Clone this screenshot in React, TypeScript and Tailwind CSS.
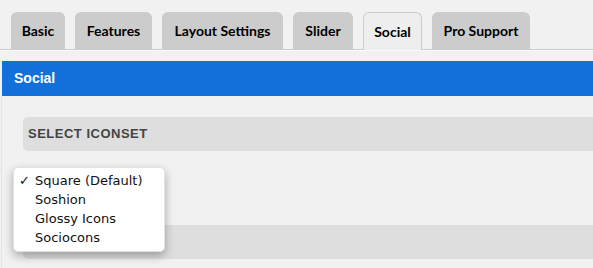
import React from "react";

const tabs = [
    {label: "Basic", w: "w-[54px]"},
    {label: "Features", w: "w-[77px]"},
    {label: "Layout Settings", w: "w-[121px]"},
    {label: "Slider", w: "w-[60px]"},
    {label: "Social", w: "w-[59px]", active: true},
    {label: "Pro Support", w: "w-[98px]"},
];

const options = ["Square (Default)", "Soshion", "Glossy Icons", "Sociocons"];

export default function App() {
    return (
        <main className="w-[593px] h-[268px] overflow-hidden bg-[#f1f1f1] relative">
            {/* tab strip */}
            <div className="flex gap-[10px] pl-[11px] pt-[12px] border-b border-[#cccccc] h-[50px]">
                {tabs.map((t) => (
                    <div key={t.label}
                         className={
                             t.active
                                 ? `${t.w} h-[38px] -mb-px rounded-t-[6px] bg-[#eeeeee] border border-b-0 border-[#cccccc] flex items-center justify-center text-[14px] font-bold text-black [font-family:Lato,sans-serif]`
                                 : `${t.w} h-[37px] rounded-t-[6px] bg-[#cccccc] flex items-center justify-center text-[14px] font-bold text-black [font-family:Lato,sans-serif]`
                         }>
                        {t.label}
                    </div>
                ))}
            </div>

            <div className="h-[11px] border-t border-[#fafafa]"></div>

            {/* section header */}
            <div className="ml-[2px] h-[35px] bg-[#136fd9] flex items-center pl-[12px]">
                <span className="text-white font-bold text-[14px] [font-family:'Liberation_Sans',Arial,sans-serif]">
                    Social
                </span>
            </div>

            {/* body */}
            <div className="ml-[1px] border-l border-[#e4e4e4] h-[200px] pl-[21px] pt-[21px] relative">
                <div className="h-[34px] bg-[#dedede] rounded-l-[5px] flex items-center pl-[5px]">
                    <span className="text-[13px] font-bold text-[#444] tracking-[0.5px] [font-family:'Liberation_Sans',Arial,sans-serif]">
                        SELECT ICONSET
                    </span>
                </div>
                <div className="h-[74px]"></div>
                <div className="h-[34px] bg-[#dedede] rounded-l-[5px]"></div>

                {/* open select menu */}
                <div className="absolute left-[11px] top-[71px] w-[152px] h-[85px] bg-white rounded-[5px] shadow-[0_4px_10px_rgba(0,0,0,0.3)] border border-[#e2e2e2] pt-[3px]">
                    {options.map((o, i) => (
                        <div key={o} className="relative h-[19px] flex items-center pl-[21px] text-[13px] text-[#111] [font-family:'DejaVu_Sans',sans-serif]">
                            {i === 0 && <span className="absolute left-[5px] text-[13px]">✓</span>}
                            {o}
                        </div>
                    ))}
                </div>
            </div>
        </main>
    );
}
